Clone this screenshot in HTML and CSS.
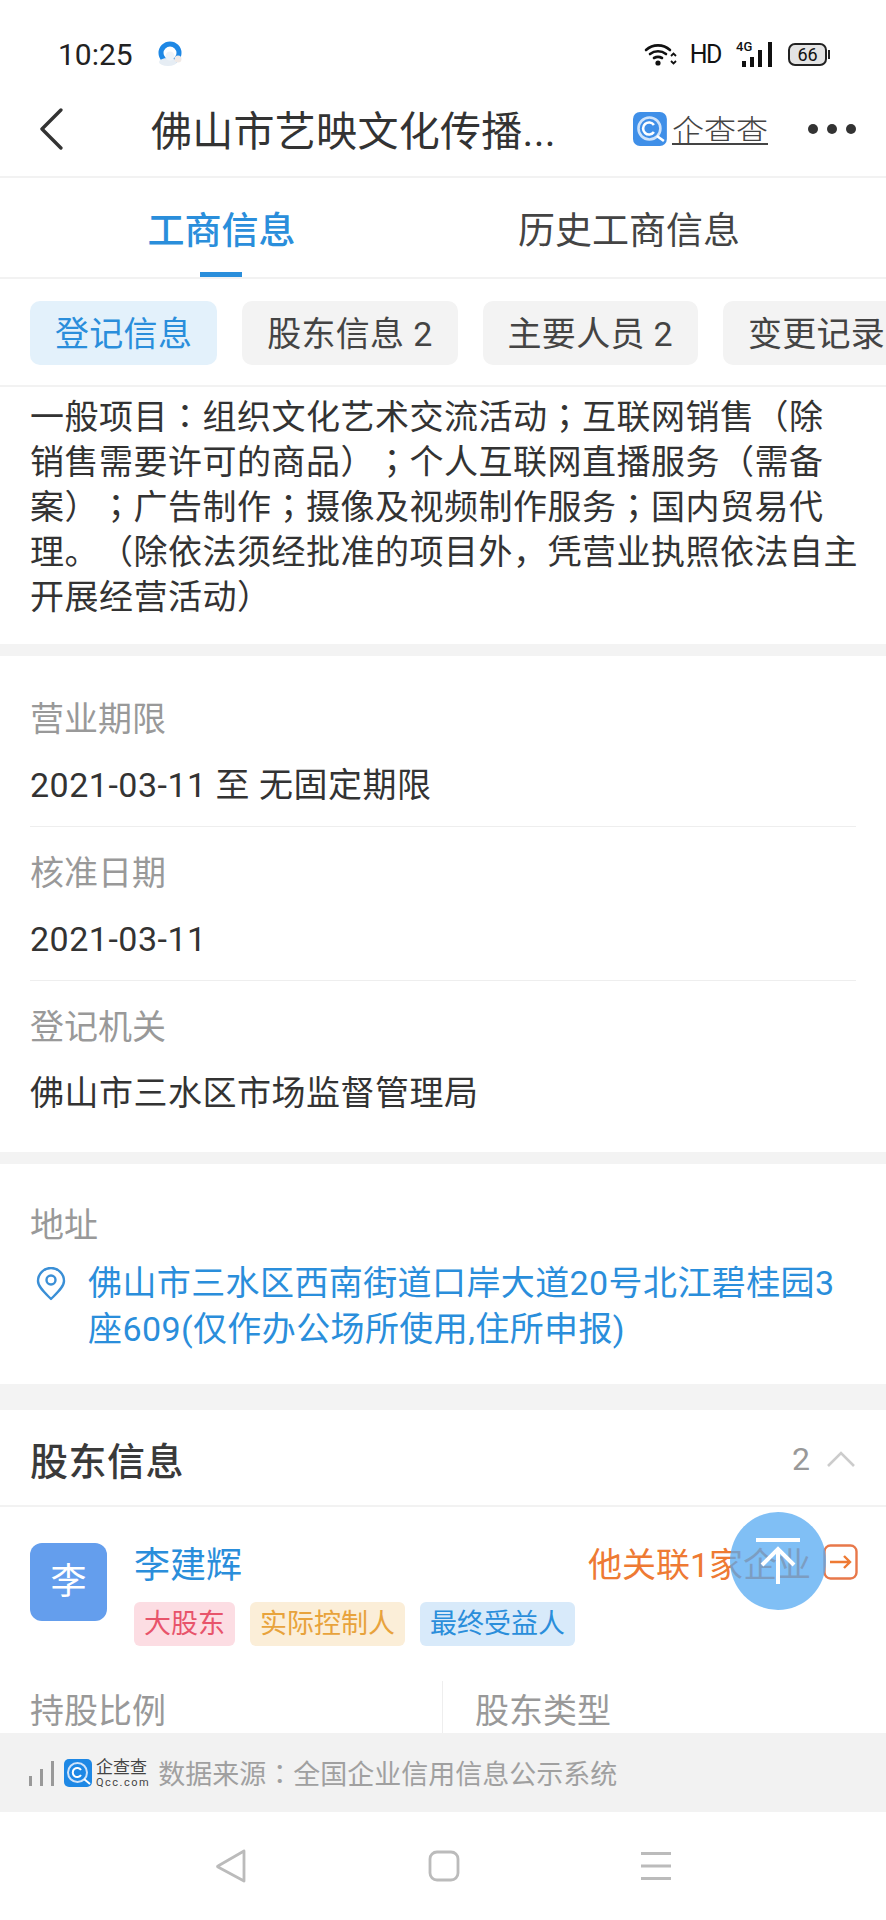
FILE: index.html
```html
<!DOCTYPE html>
<html lang="zh-CN">
<head>
  <meta charset="UTF-8">
  <meta name="viewport" content="width=device-width, initial-scale=1.0">
  <title>工商信息</title>
  <link rel="stylesheet" href="styles.css">
</head>
<body>
  <div class="phone">
    <div class="status-bar">
      <div class="status-left">
        <span class="time">10:25</span>
        <svg class="app-icon" width="26" height="26" viewBox="0 0 26 26">
          <circle cx="13" cy="12" r="9" fill="none" stroke="#1e88e5" stroke-width="5"/>
          <ellipse cx="11" cy="21" rx="9" ry="4" fill="#e6edf4"/>
          <circle cx="13" cy="15" r="4.5" fill="#eef3f8"/>
          <circle cx="21" cy="18" r="3.5" fill="#f0e9e6"/>
        </svg>
      </div>
      <div class="status-right">
        <svg width="33" height="26" viewBox="0 0 33 26">
          <path d="M2 9 A18 18 0 0 1 26 9 M6 13 A13 13 0 0 1 22 13 M10 17 A8 8 0 0 1 18 17" fill="none" stroke="#111" stroke-width="2.6" stroke-linecap="round"/>
          <circle cx="14" cy="22" r="2.6" fill="#111"/>
          <path d="M27 15 l2.5 -2.5 l2.5 2.5 M27 20 l2.5 2.5 l2.5 -2.5" fill="none" stroke="#111" stroke-width="1.8"/>
        </svg>
        <span class="hd">HD</span>
        <div class="signal">
          <span class="four-g">4G</span>
          <svg width="36" height="25" viewBox="0 0 36 25">
            <rect x="6" y="19" width="4" height="6" fill="#111"/>
            <rect x="14" y="15" width="4" height="10" fill="#111"/>
            <rect x="22" y="8" width="4" height="17" fill="#111"/>
            <rect x="32" y="0" width="4" height="25" fill="#111"/>
          </svg>
        </div>
        <div class="battery"><span>66</span></div>
      </div>
    </div>

    <div class="nav">
      <svg class="back" width="26" height="42" viewBox="0 0 26 42">
        <path d="M23 2 L4 21 L23 40" fill="none" stroke="#333" stroke-width="3.4" stroke-linecap="round" stroke-linejoin="round"/>
      </svg>
      <div class="nav-title">佛山市艺映文化传播...</div>
      <svg class="logo" width="34" height="34" viewBox="0 0 34 34">
        <rect width="34" height="34" rx="7" fill="#3f8fe8"/>
        <circle cx="16.5" cy="16.5" r="11" fill="none" stroke="#cfe3fa" stroke-width="2.6"/>
        <path d="M21 13 A6 6 0 1 0 21 20" fill="none" stroke="#fff" stroke-width="2.6"/>
        <path d="M24 24 L31 29" stroke="#fff" stroke-width="2.6"/>
      </svg>
      <span class="logo-text">企查查</span>
      <div class="more"><i></i><i></i><i></i></div>
    </div>

    <div class="tabs">
      <div class="tab tab-active">工商信息</div>
      <div class="tab tab-history">历史工商信息</div>
    </div>

    <div class="pills">
      <div class="pill pill-active">登记信息</div>
      <div class="pill">股东信息 2</div>
      <div class="pill">主要人员 2</div>
      <div class="pill">变更记录</div>
    </div>

    <div class="content">
      <div class="section scope">
        一般项目<span class="mid" lang="zh-Hant">：</span>组织文化艺术交流活动<span class="mid" lang="zh-Hant">；</span>互联网销售（除<br>
        销售需要许可的商品）<span class="mid" lang="zh-Hant">；</span>个人互联网直播服务（需备<br>
        案）<span class="mid" lang="zh-Hant">；</span>广告制作<span class="mid" lang="zh-Hant">；</span>摄像及视频制作服务<span class="mid" lang="zh-Hant">；</span>国内贸易代<br>
        理。（除依法须经批准的项目外，凭营业执照依法自主<br>
        开展经营活动）
      </div>

      <div class="section info">
        <div class="field">
          <div class="label">营业期限</div>
          <div class="value">2021-03-11 至 无固定期限</div>
        </div>
        <div class="field">
          <div class="label">核准日期</div>
          <div class="value">2021-03-11</div>
        </div>
        <div class="field">
          <div class="label">登记机关</div>
          <div class="value">佛山市三水区市场监督管理局</div>
        </div>
      </div>

      <div class="section address">
        <div class="label">地址</div>
        <div class="address-row">
          <svg class="pin" width="30" height="34" viewBox="0 0 30 34">
            <path d="M15 32 C9 26 2 20 2 14 A13 13 0 0 1 28 14 C28 20 21 26 15 32 Z" fill="none" stroke="#3a8fd6" stroke-width="2.4" stroke-linejoin="round"/>
            <circle cx="15" cy="13" r="4.5" fill="none" stroke="#3a8fd6" stroke-width="2.4"/>
          </svg>
          <div class="address-text">佛山市三水区西南街道口岸大道20号北江碧桂园3座609(仅作办公场所使用,住所申报)</div>
        </div>
      </div>

      <div class="section holders">
        <div class="holders-head">
          <span class="holders-title">股东信息</span>
          <span class="holders-count">2</span>
          <svg width="30" height="18" viewBox="0 0 30 18">
            <path d="M2 16 L15 3 L28 16" fill="none" stroke="#ccc" stroke-width="2.6"/>
          </svg>
        </div>
        <div class="holder">
          <div class="avatar">李</div>
          <div class="holder-main">
            <div class="holder-top">
              <span class="holder-name">李建辉</span>
              <span class="holder-link">他关联1家企业</span>
              <svg class="link-icon" width="35" height="36" viewBox="0 0 35 36">
                <rect x="1.5" y="1.5" width="32" height="33" rx="6" fill="none" stroke="#e8784a" stroke-width="2.4"/>
                <path d="M7 18 H27 M21 12 L27 18 L21 24" fill="none" stroke="#ee7a33" stroke-width="2.4"/>
              </svg>
            </div>
            <div class="tags">
              <span class="tag tag-red">大股东</span>
              <span class="tag tag-gold">实际控制人</span>
              <span class="tag tag-blue">最终受益人</span>
            </div>
          </div>
        </div>
        <div class="holder-cols">
          <div class="holder-col">持股比例</div>
          <div class="holder-col">股东类型</div>
        </div>
      </div>
    </div>

    <div class="source">
      <svg class="source-bars" width="26" height="26" viewBox="0 0 26 26">
        <rect x="1" y="16" width="3" height="10" fill="#999"/>
        <rect x="12" y="9" width="3" height="17" fill="#999"/>
        <rect x="23" y="1" width="3" height="25" fill="#999"/>
      </svg>
      <svg class="source-icon" width="28" height="28" viewBox="0 0 28 28">
        <rect width="28" height="28" rx="5" fill="#1e88e5"/>
        <circle cx="13.5" cy="13.5" r="9.5" fill="none" stroke="#cfe3fa" stroke-width="2"/>
        <path d="M17 11 A4.5 4.5 0 1 0 17 16" fill="none" stroke="#fff" stroke-width="2"/>
        <path d="M20 20 L26 25" stroke="#fff" stroke-width="2"/>
      </svg>
      <div class="source-logo">
        <span class="source-cn">企查查</span>
        <span class="source-en">Qcc.com</span>
      </div>
      <span class="source-text">数据来源<span class="mid" lang="zh-Hant">：</span>全国企业信用信息公示系统</span>
    </div>

    <div class="sys-nav">
      <svg width="32" height="36" viewBox="0 0 32 36">
        <path d="M29 3 L3 18 Q2 18.500 3 19 L29 33 Z" fill="none" stroke="#bbb" stroke-width="2.8" stroke-linejoin="round"/>
      </svg>
      <svg width="32" height="32" viewBox="0 0 32 32">
        <rect x="2" y="2" width="28" height="28" rx="7" fill="none" stroke="#bbb" stroke-width="2.8"/>
      </svg>
      <svg width="30" height="28" viewBox="0 0 30 28">
        <path d="M0 1.500 H30 M0 14 H30 M0 26.500 H30" stroke="#bbb" stroke-width="2.8"/>
      </svg>
    </div>

    <div class="to-top">
      <svg width="46" height="46" viewBox="0 0 46 46">
        <path d="M1 2 H45 M23 46 V11 M7 27 L23 11 L39 27" fill="none" stroke="#fff" stroke-width="4"/>
      </svg>
    </div>
  </div>
</body>
</html>
```

FILE: styles.css
```css
* {
  margin: 0;
  padding: 0;
  box-sizing: border-box;
}

body {
  font-family: Roboto, "Noto Sans CJK SC", sans-serif;
  background-color: white;
  color: #333;
  text-spacing-trim: space-all;
}

/* centred full-width punctuation, as on the device font */
.mid {
  font-family: "Noto Sans CJK TC", sans-serif;
  line-height: 1;
}

.phone {
  position: relative;
  width: 886px;
  height: 1920px;
  display: flex;
  flex-direction: column;
  overflow: hidden;
}

.status-bar {
  height: 92px;
  flex-shrink: 0;
  padding: 34px 57px 0 58px;
  display: flex;
  justify-content: space-between;
  align-items: flex-start;
}

.status-left,
.status-right {
  display: flex;
  align-items: center;
  height: 40px;
}

.time {
  font-size: 30px;
  color: #222;
}

.app-icon {
  margin-left: 24px;
}

.status-right {
  color: #111;
}

.hd {
  font-size: 25px;
  letter-spacing: -1.5px;
  margin-left: 13px;
}

.signal {
  position: relative;
  margin-left: 15px;
  width: 36px;
  height: 25px;
}

.four-g {
  position: absolute;
  left: 0;
  top: -2px;
  font-size: 13px;
  line-height: 14px;
  font-weight: 500;
}

.battery {
  position: relative;
  margin-left: 16px;
  margin-right: 2px;
  width: 39px;
  height: 23px;
  border: 2px solid #222;
  border-radius: 7px;
  background-color: #e4e4e4;
  display: flex;
  align-items: center;
  justify-content: center;
  font-size: 18px;
}

.battery::after {
  content: "";
  position: absolute;
  right: -5px;
  top: 5px;
  width: 2px;
  height: 9px;
  background-color: #222;
}

.nav {
  height: 86px;
  flex-shrink: 0;
  display: flex;
  align-items: center;
  padding: 0 30px 10px 38px;
  border-bottom: 2px solid #f2f2f2;
}

.nav-title {
  margin-left: 87px;
  margin-bottom: 2px;
  width: 484px;
  font-size: 41px;
  letter-spacing: 0.3px;
  white-space: nowrap;
}

.logo-text {
  margin-left: 5px;
  font-size: 32px;
  font-weight: 300;
  color: #444;
  white-space: nowrap;
  text-decoration: underline;
  text-decoration-thickness: 2px;
  text-underline-offset: 0;
}

.more {
  margin-left: 40px;
  display: flex;
  gap: 9px;
}

.more i {
  width: 10px;
  height: 10px;
  border-radius: 50%;
  background-color: #333;
}

.tabs {
  height: 101px;
  flex-shrink: 0;
  display: grid;
  grid-template-columns: 443px 372px;
  border-bottom: 2px solid #f2f2f2;
}

.tab {
  text-align: center;
  font-size: 37px;
  line-height: 91px;
  padding-top: 8px;
  color: #444;
  position: relative;
}

.tab-active {
  color: #2a8edb;
  font-weight: 500;
}

.tab-active::after {
  content: "";
  position: absolute;
  left: 200px;
  bottom: 0;
  width: 42px;
  height: 5px;
  background-color: #2a8edb;
}

.pills {
  height: 108px;
  flex-shrink: 0;
  display: flex;
  gap: 25px;
  padding: 22px 0 0 30px;
  border-bottom: 2px solid #f2f2f2;
  overflow: hidden;
}

.pill {
  flex-shrink: 0;
  height: 64px;
  line-height: 66px;
  padding: 0 25px;
  border-radius: 10px;
  background-color: #f3f3f3;
  font-size: 34px;
  letter-spacing: 0.3px;
  color: #444;
  white-space: nowrap;
}

.pill-active {
  background-color: #e3f1fb;
  color: #2a8edb;
}

.content {
  flex: 1;
  overflow: hidden;
  background-color: #f3f3f3;
}

.section {
  background-color: white;
  padding: 0 30px;
}

.scope {
  height: 257px;
  padding-top: 8px;
  font-size: 34px;
  line-height: 45px;
  letter-spacing: 0.5px;
  white-space: nowrap;
}

.info {
  margin-top: 12px;
  height: 496px;
  padding-top: 17px;
}

.field {
  height: 154px;
  padding-top: 24px;
  border-bottom: 1px solid #eee;
}

.field:last-child {
  border-bottom: 0;
}

.label {
  font-size: 34px;
  line-height: 44px;
  color: #999;
}

.value {
  margin-top: 22px;
  font-size: 34px;
  line-height: 44px;
  letter-spacing: 0.5px;
}

.address {
  margin-top: 12px;
  height: 220px;
  padding-top: 39px;
}

.address-row {
  margin-top: 13px;
  display: flex;
  gap: 22px;
}

.pin {
  flex-shrink: 0;
  margin-left: 6px;
  margin-top: 7px;
}

.address-text {
  font-size: 34px;
  line-height: 46px;
  letter-spacing: 0.4px;
  color: #2a8edb;
}

.holders {
  margin-top: 26px;
}

.holders-head {
  height: 97px;
  display: flex;
  align-items: center;
  margin: 0 -30px;
  padding: 2px 30px 0;
  border-bottom: 2px solid #f2f2f2;
}

.holders-title {
  font-size: 38px;
  font-weight: 500;
  color: #3a3a3a;
  letter-spacing: 0.5px;
  flex: 1;
}

.holders-count {
  font-size: 32px;
  color: #999;
  margin-right: 16px;
}

.holder {
  display: flex;
  padding-top: 36px;
}

.avatar {
  width: 77px;
  height: 78px;
  border-radius: 12px;
  background-color: #649eed;
  color: white;
  font-size: 36px;
  text-align: center;
  line-height: 78px;
  flex-shrink: 0;
}

.holder-main {
  margin-left: 27px;
  margin-right: -2px;
  flex: 1;
}

.holder-top {
  display: flex;
  align-items: center;
  height: 38px;
}

.holder-name {
  font-size: 36px;
  color: #2a8edb;
  flex: 1;
}

.holder-link {
  font-size: 34px;
  color: #ee7a33;
}

.link-icon {
  margin-left: 12px;
  flex-shrink: 0;
}

.tags {
  margin-top: 21px;
  display: flex;
  gap: 15px;
}

.tag {
  height: 44px;
  line-height: 44px;
  padding: 0 10px;
  border-radius: 6px;
  font-size: 27px;
}

.tag-red {
  background-color: #fcdde3;
  color: #e8546b;
}

.tag-gold {
  background-color: #fbeed8;
  color: #e8a33c;
}

.tag-blue {
  background-color: #d8eafa;
  color: #2a8edb;
}

.holder-cols {
  display: grid;
  grid-template-columns: 412px 1fr;
  margin-top: 35px;
}

.holder-col {
  font-size: 34px;
  line-height: 54px;
  padding-top: 3px;
  color: #999;
}

.holder-col + .holder-col {
  padding-left: 32px;
  border-left: 1px solid #eee;
}

.source {
  height: 79px;
  flex-shrink: 0;
  background-color: #f2f2f2;
  display: flex;
  align-items: center;
  padding-left: 28px;
}

.source-icon {
  margin-left: 10px;
}

.source-logo {
  margin-left: 4px;
  display: flex;
  flex-direction: column;
  line-height: 1;
  color: #444;
}

.source-cn {
  font-size: 17px;
  line-height: 20px;
}

.source-en {
  font-size: 11px;
  line-height: 12px;
  letter-spacing: 1.5px;
}

.source-text {
  margin-left: 8px;
  font-size: 27px;
  color: #a0a0a0;
}

.sys-nav {
  height: 108px;
  flex-shrink: 0;
  display: flex;
  align-items: center;
  justify-content: center;
  gap: 181px;
}

.to-top {
  position: absolute;
  left: 730px;
  top: 1512px;
  width: 96px;
  height: 98px;
  border-radius: 50%;
  background-color: rgba(85, 170, 242, 0.75);
  display: flex;
  align-items: flex-start;
  justify-content: center;
  padding-top: 26px;
  overflow: hidden;
}
```
